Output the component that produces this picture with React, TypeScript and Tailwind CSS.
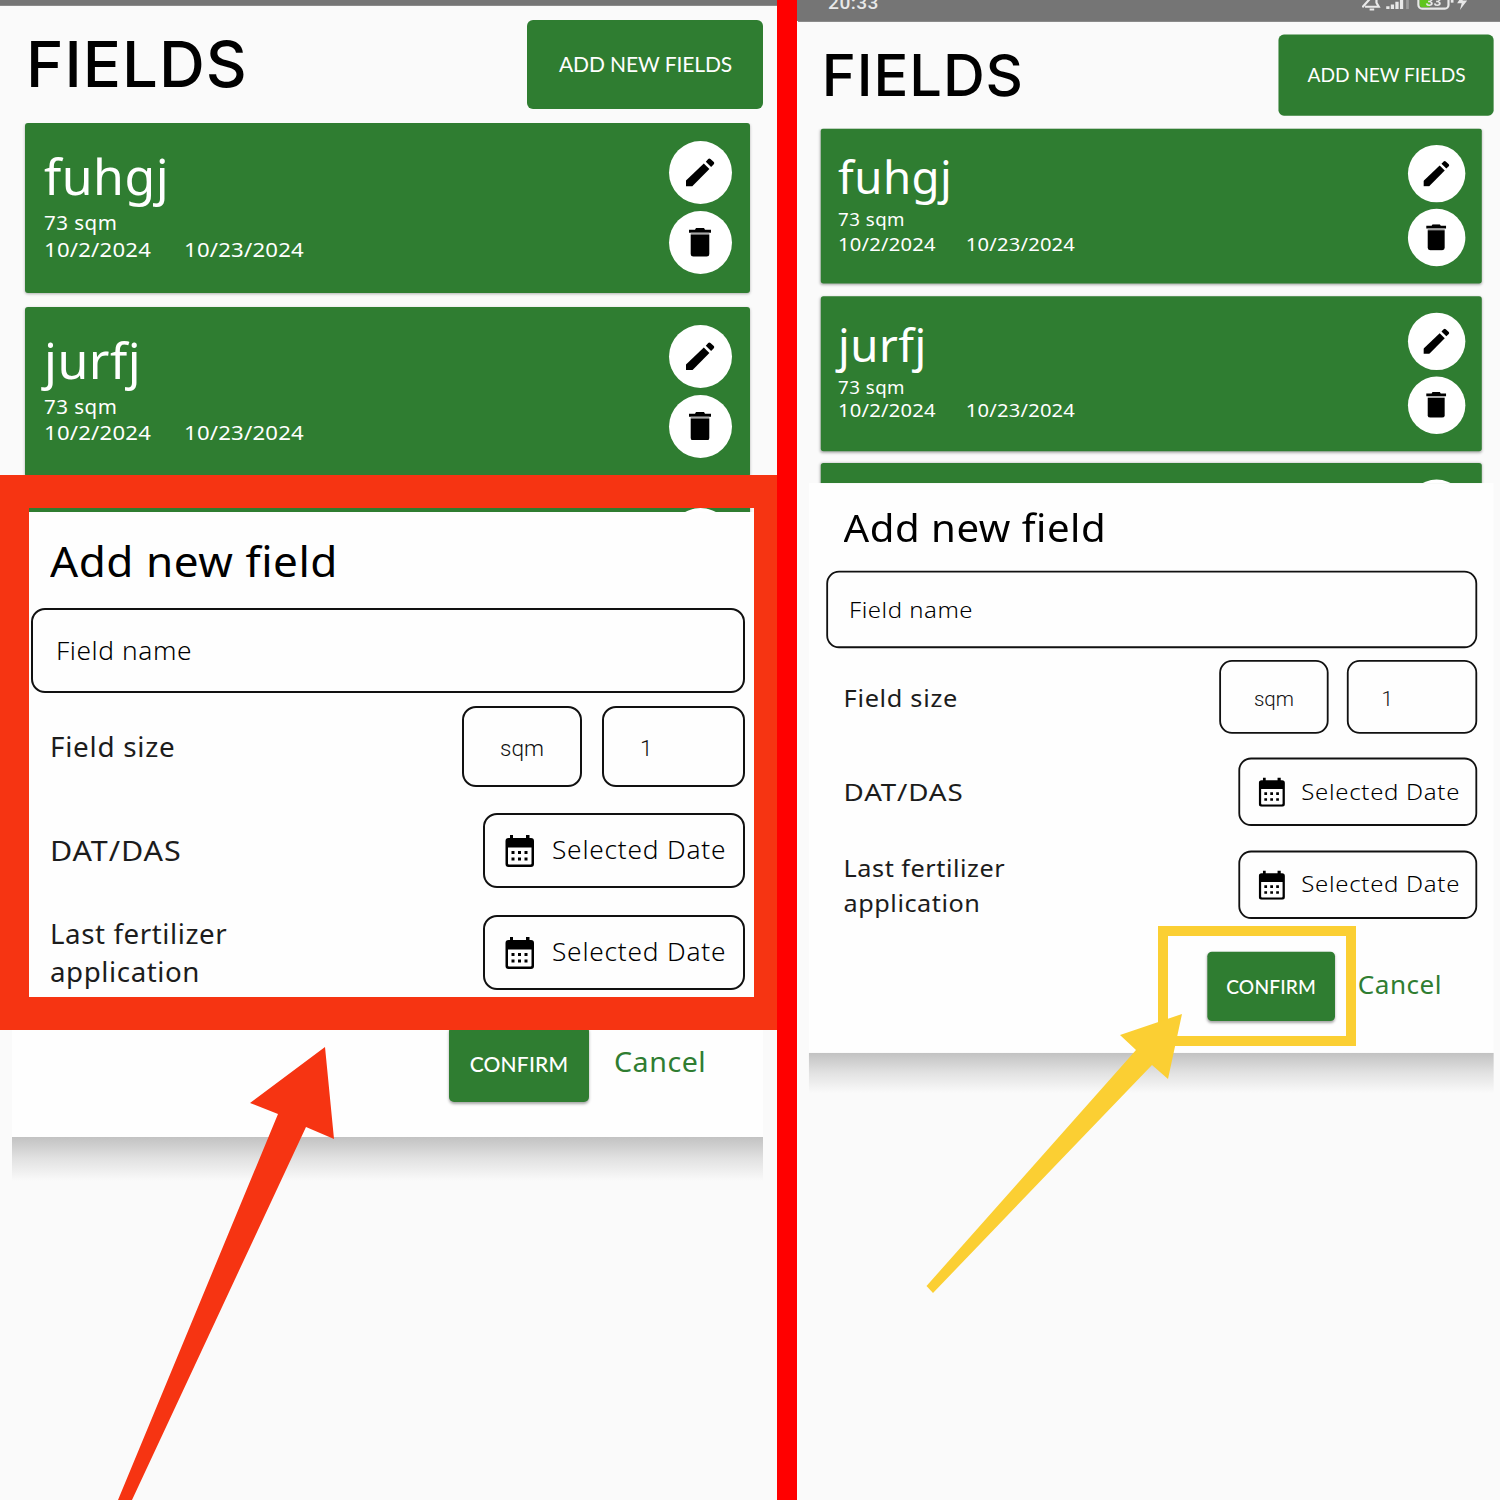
const fields = [
  { name: "fuhgj", size: "73 sqm", start: "10/2/2024", end: "10/23/2024" },
  { name: "jurfj", size: "73 sqm", start: "10/2/2024", end: "10/23/2024" },
  { name: "", size: "", start: "", end: "" },
];

function StatusBar({ detailed }: { detailed: boolean }) {
  if (!detailed) return <div className="h-9 shrink-0 border-b border-[#8a8a8a] bg-[#757575]" />;
  return (
    <div className="flex h-9 shrink-0 items-start border-b border-[#8a8a8a] bg-[#757575] pr-[40px] pl-[33px] text-[#e8e8e8]">
      <span className="mt-[3px] font-['Roboto',sans-serif] text-[21px] leading-6 font-medium tracking-[0.5px]">20:33</span>
      <svg className="-mt-[2px] ml-auto h-[26px] w-[118px]" viewBox="0 0 118 26" fill="none" stroke="currentColor" strokeWidth="2.4">
        <path d="M0 22 L17 3 M3 21.500 H18 L15.500 17 V10 M8 24.500 H13" />
        <path d="M28 24 V21 M33 24 V19 M38 24 V16 M43 24 V10" strokeWidth="3.600" />
        <path d="M49.500 24 V8" strokeWidth="3" stroke="#9b9b9b" />
        <rect x="61.500" y="5" width="33" height="18.500" rx="4" />
        <path d="M63 7 H74 V22 H65 Q63 21.500 63 19.500 Z" fill="#5fc51c" stroke="none" />
        <path d="M98.500 12 V17" strokeWidth="3" />
        <path d="M111 7 L104 17.500 H109 L107 25 L115 14.500 H110 Z" fill="currentColor" stroke="none" />
        <text x="78" y="21" textAnchor="middle" fill="currentColor" stroke="none" className="font-['Roboto',sans-serif] text-[15px] font-bold">33</text>
      </svg>
    </div>
  );
}

function PencilIcon() {
  return (
    <svg className="size-[28.600px]" viewBox="0 0 28.6 28.6" fill="#000">
      <path d="M0 28.300 V22.500 L17.800 5.500 L23.400 11 L6.300 28.300 Z" />
      <path d="M19.800 3.800 L22.200 1.100 Q23.300 0 24.500 1.100 L27.800 4.100 Q28.800 5.200 27.800 6.300 L25.100 8.900 Z" />
    </svg>
  );
}

function TrashIcon() {
  return (
    <svg className="mr-px h-[28.500px] w-[22px]" viewBox="0 0 22 28.5" fill="#000">
      <path d="M0 1.700 H6 L7 0 H15 L16 1.700 H22 V4.700 H0 Z" />
      <path d="M1.700 4.700 H20.300 V6.500 H1.700 Z" fill="#a8a8a8" />
      <path d="M1.700 6.500 H20.300 V25.800 Q20.300 28.500 17.600 28.500 H4.400 Q1.700 28.500 1.700 25.800 Z" />
    </svg>
  );
}

function RoundButton({ kind }: { kind: "edit" | "delete" }) {
  return (
    <button className="flex size-[63px] items-center justify-center rounded-full bg-white">
      {kind === "edit" ? <PencilIcon /> : <TrashIcon />}
    </button>
  );
}

function FieldCard({ field }: { field: (typeof fields)[number] }) {
  return (
    <div className="flex h-[170px] shrink-0 justify-between rounded-[3px] bg-[#2f7d31] pt-[18px] pr-[18px] pl-[19px] text-white shadow-[0_1px_3px_rgba(0,0,0,0.3)]">
      <div className="pt-[4px]">
        <div className="h-[63px] text-[50px] leading-[63px] tracking-[0.5px]">{field.name}</div>
        <div className="mt-[1px] h-[27px] text-[20.500px] leading-[27px] tracking-[0.5px]">{field.size}</div>
        <div className="-mt-[0.500px] flex text-[20.500px] leading-[27px] tracking-[0.2px]">
          <span className="w-[140px] origin-left scale-x-[1.08]">{field.start}</span>
          <span className="origin-left scale-x-[1.08]">{field.end}</span>
        </div>
      </div>
      <div className="flex flex-col gap-[7px]">
        <RoundButton kind="edit" />
        <RoundButton kind="delete" />
      </div>
    </div>
  );
}

function CalendarIcon() {
  return (
    <svg className="mt-[1px] h-[32px] w-[30px]" viewBox="0 0 30 32" fill="none">
      <path d="M5 0 H8 V3 H21 V0 H24.500 V3 H26 Q29 3 29 6 V29 Q29 32 26 32 H3.500 Q0.500 32 0.500 29 V6 Q0.500 3 3.500 3 H5 Z M3 12.500 V28.500 Q3 29.500 4 29.500 H25.500 Q26.500 29.500 26.500 28.500 V12.500 Z" fill="#000" fillRule="evenodd" />
      <path d="M6.500 17.500 H9.500 M13 17.500 H16 M19.500 17.500 H22.500 M6.500 24 H9.500 M13 24 H16 M19.500 24 H22.500" stroke="#000" strokeWidth="3" />
    </svg>
  );
}

function DateButton() {
  return (
    <button className="flex h-[75px] w-[262px] items-center rounded-[14px] border-[2.4px] border-[#111] pl-[20px]">
      <CalendarIcon />
      <span className="mb-[4px] ml-[17px] origin-left scale-x-[1.05] text-[25px] leading-9 font-light tracking-[0.75px] whitespace-nowrap text-black">Selected Date</span>
    </button>
  );
}

function AddFieldSheet() {
  return (
    <div className="ml-3 h-[625px] w-[751px] shrink-0 bg-[#fefefe] pr-[18px] pl-[19px]">
      <h2 className="ml-[19px] origin-left scale-x-[1.05] pt-[20px] text-[42px] leading-[58px] tracking-[0.5px]">Add new field</h2>
      <div className="mt-[18px] flex h-[85px] items-center rounded-[14px] border-[2.4px] border-[#111] pl-[23px] text-[25px] font-light text-black">
        <span className="origin-left scale-x-[1.05] tracking-[0.55px]">Field name</span>
      </div>
      <div className="mt-[13px] flex h-[81px] items-center pl-[19px]">
        <span className="mt-[3px] origin-left scale-x-[1.05] text-[26.500px] tracking-[0.7px] text-[#1c1c1c]">Field size</span>
        <div className="ml-auto flex h-[81px] w-[120px] items-center justify-center rounded-[14px] border-[2.4px] border-[#111] pt-[4px] font-['Roboto',sans-serif] text-[22.500px] font-[350] text-[#111]">sqm</div>
        <div className="ml-[20px] flex h-[81px] w-[143px] items-center rounded-[14px] border-[2.4px] border-[#111] pt-[4px] pl-[36px] font-['Roboto',sans-serif] text-[22.500px] font-[350] text-[#111]">1</div>
      </div>
      <div className="mt-[26px] flex h-[75px] items-center justify-between pl-[19px]">
        <span className="mt-[3px] origin-left scale-x-[1.15] text-[26.500px] tracking-[0.8px] text-[#1c1c1c]">DAT/DAS</span>
        <DateButton />
      </div>
      <div className="mt-[27px] flex h-[75px] items-center justify-between pl-[19px]">
        <span className="mt-[2px] origin-left scale-x-[1.045] text-[26.500px] leading-[37.500px] tracking-[0.55px] text-[#1c1c1c]">
          Last fertilizer
          <br />
          application
        </span>
        <DateButton />
      </div>
      <div className="mt-[36px] flex h-[76px] pl-[418px]">
        <button className="h-[76px] w-[140px] rounded-[5px] bg-[#2f7d31] font-['Lato',sans-serif] text-[21px] font-medium tracking-[0.2px] text-white shadow-[0_2px_3px_rgba(0,0,0,0.35)]">CONFIRM</button>
        <span className="ml-[25px] origin-left scale-x-[1.06] pt-[15px] text-[27px] leading-[42px] tracking-[0.5px] text-[#2f7d31]">Cancel</span>
      </div>
    </div>
  );
}

function Phone({ detailedStatus = false }: { detailedStatus?: boolean }) {
  return (
    <div className="flex h-[1800px] w-[777px] flex-col bg-[#fafafa] font-['Noto_Sans',sans-serif] text-black">
      <StatusBar detailed={detailedStatus} />
      <header className="flex h-[117px] shrink-0 justify-between pt-[14px] pr-[14px] pl-[26px]">
        <h1 className="font-['Inter',sans-serif] text-[63.500px] leading-[88px] font-medium tracking-[1px]">FIELDS</h1>
        <button className="h-[89px] w-[236px] rounded-[6px] bg-[#2f7d31] pb-[1px] pl-[1px] font-['Lato',sans-serif] text-[21px] tracking-[-0.1px] text-white">ADD NEW FIELDS</button>
      </header>
      <div className="flex h-[389px] shrink-0 flex-col gap-[13.500px] overflow-hidden pr-[27px] pl-[25px]">
        {fields.map((field, i) => (
          <FieldCard key={i} field={field} />
        ))}
      </div>
      <AddFieldSheet />
      <div className="ml-3 h-[44px] w-[751px] shrink-0 bg-linear-to-b from-[#c2c2c2] via-[#e2e2e2] to-[#fafafa]" />
    </div>
  );
}

export default function App() {
  return (
    <div className="relative flex h-[1500px] w-[1500px] overflow-hidden bg-[#fafafa]">
      <section className="h-full w-[777px] shrink-0 overflow-hidden">
        <div className="-mt-[30px]">
          <Phone />
        </div>
      </section>
      <div className="h-full w-5 shrink-0 bg-[#ff0000]" />
      <section className="h-full w-[703px] shrink-0 overflow-hidden bg-[linear-gradient(#757575_21px,#fafafa_21px)]">
        <div className="-mt-[11.400px] ml-[1.400px] origin-top-left scale-[0.9117]">
          <Phone detailedStatus />
        </div>
      </section>

      <div className="absolute top-[475px] left-0 h-[554.500px] w-[777px] border-y-[33px] border-r-[23px] border-l-[29px] border-[#f63412]" />
      <div className="absolute top-[926px] left-[1158px] h-[120px] w-[198px] border-[10px] border-[#fbcf33]" />
      <svg className="pointer-events-none absolute inset-0 size-full" viewBox="0 0 1500 1500">
        <path d="M325 1047 L250 1103 L278 1114 L118 1500 H132 L306 1127 L334 1139 Z" fill="#f63412" />
        <path d="M1182 1014 L1120 1035 L1136 1050 L926.500 1286 L933 1293 L1152 1065 L1168 1079 Z" fill="#fbcf33" />
      </svg>
    </div>
  );
}
